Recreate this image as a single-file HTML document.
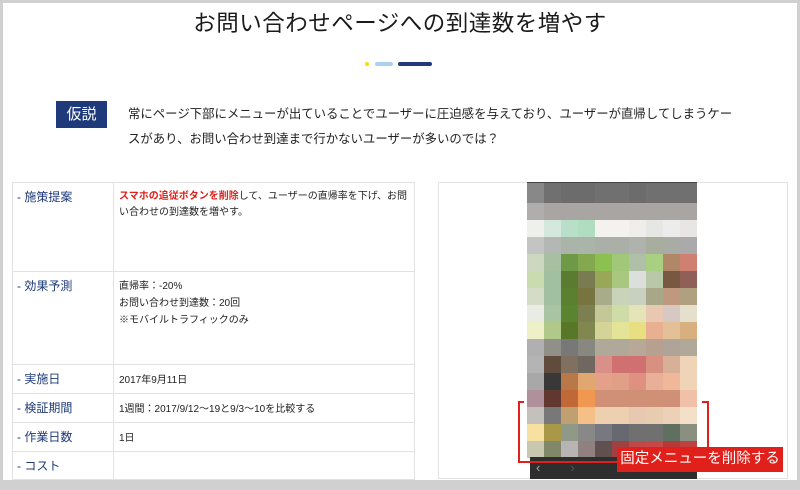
<!DOCTYPE html>
<html><head><meta charset="utf-8"><style>
*{margin:0;padding:0;box-sizing:border-box}
body{width:800px;height:490px;background:#d0d0d0;position:relative;overflow:hidden;font-family:"Liberation Sans","Noto Sans CJK JP",sans-serif;color:#222}
#page{position:absolute;left:3px;top:3px;width:794px;height:477px;background:#fff}
.a{position:absolute}
h1{position:absolute;left:0;width:800px;top:6px;text-align:center;font-weight:normal;font-size:22.5px;color:#1a1a1a;letter-spacing:0.5px}
table{position:absolute;left:12px;top:182px;width:403px;border-collapse:collapse;font-size:10px;color:#222}
td{border:1px solid #e2e2e2;vertical-align:top;padding:6px 5px}
td.l{width:101px;color:#1e3a7a;font-size:12px;padding:5px 4px}
.r{color:#e0201a;font-weight:bold}
#grid{position:absolute;left:527px;top:183px;width:170px}
.row{display:flex;height:17px}
.row div{width:17px;height:100%}
</style></head><body><div id="page"></div>
<h1>お問い合わせページへの到達数を増やす</h1>
<div class="a" style="left:365px;top:62px;width:4px;height:4px;border-radius:2px;background:#f2e400"></div>
<div class="a" style="left:375px;top:62px;width:18px;height:4px;border-radius:2px;background:#a9d0ec"></div>
<div class="a" style="left:398px;top:62px;width:34px;height:4px;border-radius:2px;background:#1e3a7a"></div>
<div class="a" style="left:56px;top:101px;width:51px;height:27px;background:#1e3a7a;color:#fff;font-size:15px;text-align:center;line-height:27px">仮説</div>
<div class="a" style="left:128px;top:102px;width:660px;white-space:nowrap;font-size:12.4px;line-height:25px;color:#222">常にページ下部にメニューが出ていることでユーザーに圧迫感を与えており、ユーザーが直帰してしまうケー<br>スがあり、お問い合わせ到達まで行かないユーザーが多いのでは？</div>
<table>
<tr style="height:89px"><td class="l">- 施策提案</td><td style="line-height:16px"><span class="r">スマホの追従ボタンを削除</span>して、ユーザーの直帰率を下げ、お問い合わせの到達数を増やす。</td></tr>
<tr style="height:93px"><td class="l">- 効果予測</td><td style="line-height:17px">直帰率：-20%<br>お問い合わせ到達数：20回<br>※モバイルトラフィックのみ</td></tr>
<tr style="height:29px"><td class="l">- 実施日</td><td>2017年9月11日</td></tr>
<tr style="height:29px"><td class="l">- 検証期間</td><td>1週間：2017/9/12〜19と9/3〜10を比較する</td></tr>
<tr style="height:29px"><td class="l">- 作業日数</td><td>1日</td></tr>
<tr style="height:28px"><td class="l">- コスト</td><td></td></tr>
</table>
<div class="a" style="left:438px;top:182px;width:350px;height:297px;border:1px solid #e2e2e2"></div>
<div class="a" style="left:527px;top:182px;width:170px;height:2px;background:#444"></div>
<div id="grid">
<div class="row" style="height:20px"><div style="background:#888"></div><div style="background:#707070"></div><div style="background:#6c6c6c"></div><div style="background:#6c6c6c"></div><div style="background:#707070"></div><div style="background:#707070"></div><div style="background:#6c6c6c"></div><div style="background:#707070"></div><div style="background:#707070"></div><div style="background:#707070"></div></div>
<div class="row"><div style="background:#b0aeac"></div><div style="background:#a8a5a2"></div><div style="background:#a8a5a2"></div><div style="background:#a8a5a2"></div><div style="background:#a8a5a2"></div><div style="background:#a8a5a2"></div><div style="background:#a8a5a2"></div><div style="background:#a8a5a2"></div><div style="background:#a8a5a2"></div><div style="background:#a8a5a2"></div></div>
<div class="row"><div style="background:#eef0ec"></div><div style="background:#d4e8dc"></div><div style="background:#b8e0c8"></div><div style="background:#b0dcc0"></div><div style="background:#f4f2ee"></div><div style="background:#f4f2ee"></div><div style="background:#f0eeea"></div><div style="background:#e6e6e4"></div><div style="background:#ececec"></div><div style="background:#e8e6e4"></div></div>
<div class="row"><div style="background:#c4c4c4"></div><div style="background:#b4b8b4"></div><div style="background:#aab4a8"></div><div style="background:#aab4a8"></div><div style="background:#aab0a8"></div><div style="background:#aab0a8"></div><div style="background:#b0b2ae"></div><div style="background:#a8ae9e"></div><div style="background:#a8aca4"></div><div style="background:#aaaaaa"></div></div>
<div class="row"><div style="background:#ccd8c0"></div><div style="background:#a8c0a0"></div><div style="background:#6e9a48"></div><div style="background:#84a850"></div><div style="background:#8cc050"></div><div style="background:#a0c878"></div><div style="background:#b0c0a8"></div><div style="background:#a8d080"></div><div style="background:#b08868"></div><div style="background:#d08070"></div></div>
<div class="row"><div style="background:#c8dcb0"></div><div style="background:#a0c0a0"></div><div style="background:#5a7c30"></div><div style="background:#787c50"></div><div style="background:#98a858"></div><div style="background:#a8c880"></div><div style="background:#dce0dc"></div><div style="background:#b8c8a8"></div><div style="background:#785840"></div><div style="background:#906058"></div></div>
<div class="row"><div style="background:#d4dcc8"></div><div style="background:#a0c0a0"></div><div style="background:#5a8030"></div><div style="background:#787440"></div><div style="background:#a8ac88"></div><div style="background:#c8d4b8"></div><div style="background:#c8d0c0"></div><div style="background:#a8a888"></div><div style="background:#c09880"></div><div style="background:#b0a080"></div></div>
<div class="row"><div style="background:#e8ece4"></div><div style="background:#a8c4a0"></div><div style="background:#5a8430"></div><div style="background:#7c8050"></div><div style="background:#c4c898"></div><div style="background:#d0dca8"></div><div style="background:#e4e4b8"></div><div style="background:#e8c8b0"></div><div style="background:#d8c8c4"></div><div style="background:#e4e0cc"></div></div>
<div class="row"><div style="background:#eef0c8"></div><div style="background:#b0c888"></div><div style="background:#587828"></div><div style="background:#808850"></div><div style="background:#d4d498"></div><div style="background:#e4e498"></div><div style="background:#e8e080"></div><div style="background:#e8b090"></div><div style="background:#e4c098"></div><div style="background:#d8b080"></div></div>
<div class="row"><div style="background:#b0b0b0"></div><div style="background:#909088"></div><div style="background:#787878"></div><div style="background:#888880"></div><div style="background:#b0a898"></div><div style="background:#b0a898"></div><div style="background:#b8a898"></div><div style="background:#b8a090"></div><div style="background:#b0a498"></div><div style="background:#b0a898"></div></div>
<div class="row"><div style="background:#b4b4b4"></div><div style="background:#604c3c"></div><div style="background:#807060"></div><div style="background:#706860"></div><div style="background:#d89088"></div><div style="background:#d07070"></div><div style="background:#d07070"></div><div style="background:#d89080"></div><div style="background:#d8b098"></div><div style="background:#f0d4b8"></div></div>
<div class="row"><div style="background:#a8a8a8"></div><div style="background:#383838"></div><div style="background:#b87848"></div><div style="background:#e0a870"></div><div style="background:#e4a088"></div><div style="background:#e0a088"></div><div style="background:#e09080"></div><div style="background:#e8b098"></div><div style="background:#f0b898"></div><div style="background:#f0d4b8"></div></div>
<div class="row"><div style="background:#b0909a"></div><div style="background:#603830"></div><div style="background:#c06838"></div><div style="background:#f09850"></div><div style="background:#d09078"></div><div style="background:#d09078"></div><div style="background:#d09078"></div><div style="background:#d09078"></div><div style="background:#d09078"></div><div style="background:#f0c0a8"></div></div>
<div class="row"><div style="background:#c4c0bc"></div><div style="background:#787878"></div><div style="background:#c0a070"></div><div style="background:#f4c088"></div><div style="background:#ecd0b0"></div><div style="background:#ecd0b0"></div><div style="background:#e8c8b0"></div><div style="background:#e8ccb0"></div><div style="background:#ecd0b8"></div><div style="background:#f4e0c8"></div></div>
<div class="row"><div style="background:#f8e0a0"></div><div style="background:#a89848"></div><div style="background:#909888"></div><div style="background:#888888"></div><div style="background:#787880"></div><div style="background:#686870"></div><div style="background:#707070"></div><div style="background:#707070"></div><div style="background:#607060"></div><div style="background:#8a9080"></div></div>
<div class="row"><div style="background:#c8c8b0"></div><div style="background:#808868"></div><div style="background:#b8b4b4"></div><div style="background:#908080"></div><div style="background:#605050"></div><div style="background:#a04040"></div><div style="background:#c04848"></div><div style="background:#c84848"></div><div style="background:#b83838"></div><div style="background:#c04040"></div></div>
</div>
<div class="a" style="left:530px;top:457px;width:167px;height:22px;background:#2e2e2e;color:#aaa;font-size:13px;line-height:22px"><span style="margin-left:6px">‹</span><span style="margin-left:30px;color:#555">›</span></div>
<div class="a" style="left:518px;top:401px;width:6px;height:62px;border:2px solid #e0201a;border-right:none"></div>
<div class="a" style="left:518px;top:461px;width:100px;height:2px;background:#e0201a"></div>
<div class="a" style="left:702px;top:401px;width:7px;height:48px;border:2px solid #e0201a;border-left:none;border-bottom:none"></div>
<div class="a" style="left:617px;top:447px;width:166px;height:25px;background:#e0201a;color:#fff;font-size:14.5px;line-height:25px;text-align:center">固定メニューを削除する</div>
</body></html>
